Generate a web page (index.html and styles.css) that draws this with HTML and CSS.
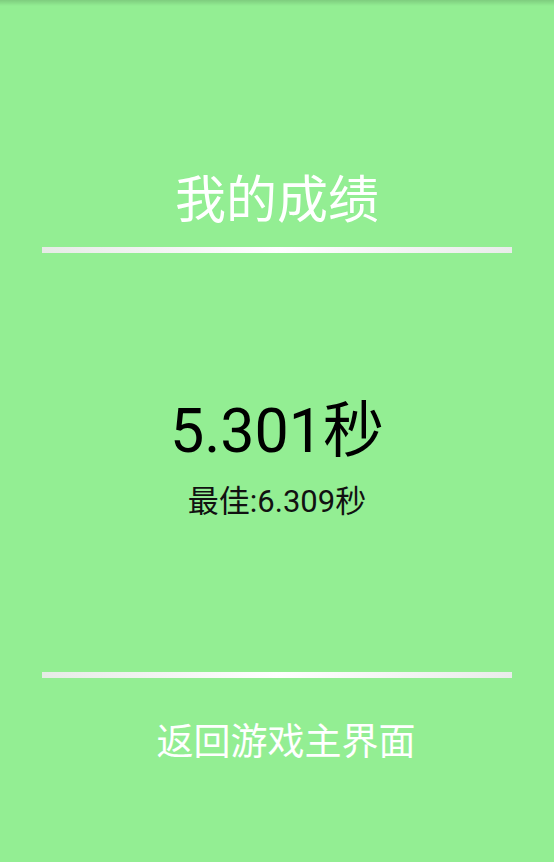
FILE: index.html
```html
<!DOCTYPE html>
<html lang="zh-CN">
<head>
    <meta charset="UTF-8">
    <meta name="viewport" content="width=device-width, initial-scale=1.0">
    <title>我的成绩</title>
    <link rel="stylesheet" href="styles.css">
</head>
<body>
    <div class="top-shadow"></div>

    <div class="screen">
        <h1 class="title">我的成绩</h1>
        <div class="divider"></div>

        <div class="result">
            <div class="time">5.301秒</div>
            <div class="best">最佳:6.309秒</div>
        </div>

        <div class="divider"></div>
        <button class="back-btn">返回游戏主界面</button>
    </div>
</body>
</html>
```

FILE: styles.css
```css
:root {
  --bg: #93ee93;
  --pad-x: 42px;
}

html,
body {
  margin: 0;
  padding: 0;
}

body {
  height: 862px;
  background-color: var(--bg);
  font-family: Roboto, "Noto Sans CJK SC", sans-serif;
  overflow: hidden;
}

.top-shadow {
  height: 6px;
  background: linear-gradient(to bottom, rgba(0, 0, 0, 0.14), rgba(0, 0, 0, 0));
}

.screen {
  display: flex;
  flex-direction: column;
  padding: 160px var(--pad-x) 0;
}

.title {
  margin: 0;
  font-family: "Noto Sans CJK SC", sans-serif;
  font-weight: normal;
  font-size: 51px;
  line-height: 60px;
  color: #fff;
  text-align: center;
}

.divider {
  height: 6px;
  background: linear-gradient(to right, #e6ebe6, #f3f4f3 25%, #fff 50%, #f4f5f4 75%, #e9ecea);
}

.screen .title + .divider {
  margin-top: 21px;
}

.result {
  display: flex;
  flex-direction: column;
  align-items: center;
  padding: 142px 0 150px;
}

.time {
  font-size: 61px;
  line-height: 72px;
  color: #000;
}

.best {
  margin-top: 15px;
  font-size: 31px;
  line-height: 40px;
  color: #111;
}

.back-btn {
  margin: 37px 0 0 18px;
  padding: 0;
  border: 0;
  background: none;
  font-family: "Noto Sans CJK SC", sans-serif;
  font-size: 37px;
  line-height: 48px;
  color: #fff;
  text-align: center;
  cursor: pointer;
}
```
